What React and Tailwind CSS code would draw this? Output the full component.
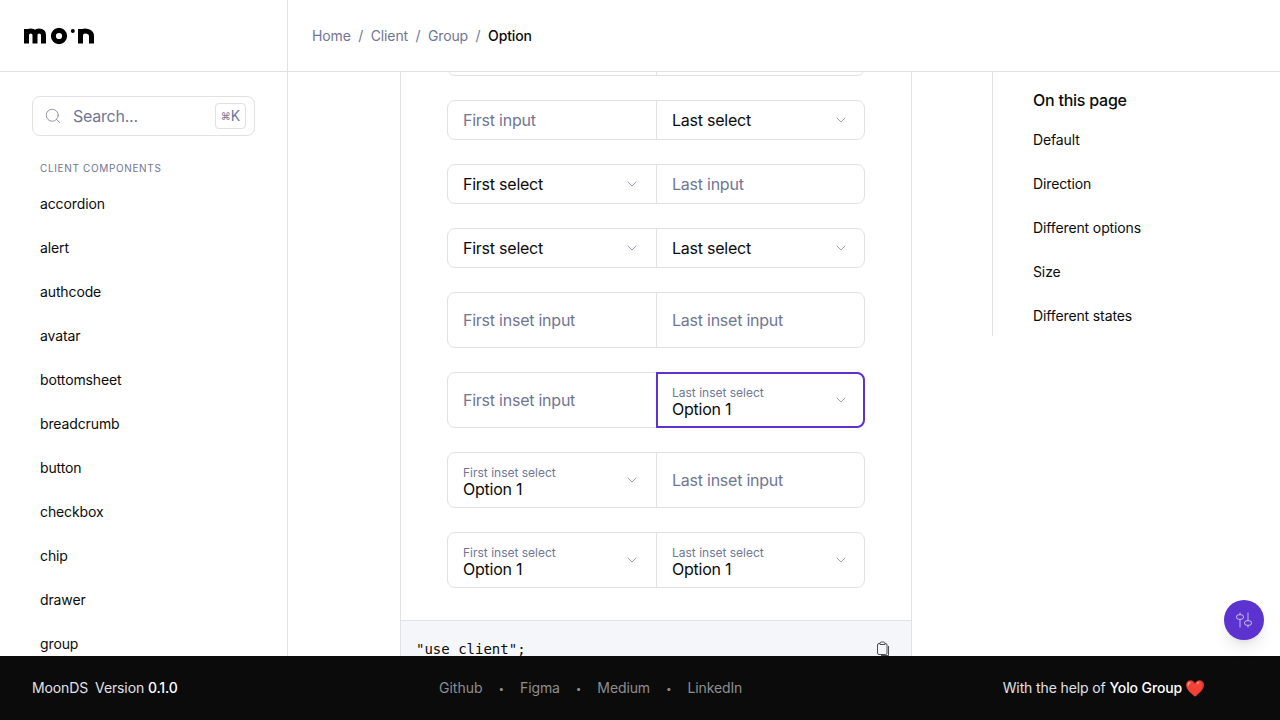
import { ChevronDown, Search } from "lucide-react";

const navItems = [
  "accordion",
  "alert",
  "authcode",
  "avatar",
  "bottomsheet",
  "breadcrumb",
  "button",
  "checkbox",
  "chip",
  "drawer",
  "group",
];

const toc = ["Default", "Direction", "Different options", "Size", "Different states"];

const rows = [
  { first: { kind: "input", text: "First input" }, last: { kind: "select", text: "Last select" } },
  { first: { kind: "select", text: "First select" }, last: { kind: "input", text: "Last input" } },
  { first: { kind: "select", text: "First select" }, last: { kind: "select", text: "Last select" } },
  { first: { kind: "input", text: "First inset input" }, last: { kind: "input", text: "Last inset input" }, tall: true },
  { first: { kind: "input", text: "First inset input" }, last: { kind: "inset", text: "Last inset select" }, tall: true, active: true },
  { first: { kind: "inset", text: "First inset select" }, last: { kind: "input", text: "Last inset input" }, tall: true },
  { first: { kind: "inset", text: "First inset select" }, last: { kind: "inset", text: "Last inset select" }, tall: true },
];

function Logo() {
  return (
    <svg width="70" height="16" viewBox="0 0 70 16" fill="none">
      <path d="M2.500 15.500V1M2.500 7C2.500 4.500 4 3 6.500 3C9.500 3 11 4.500 11 7V15.500M11 7C11 4.500 12.500 3 15 3C18 3 19.500 4.500 19.500 7V15.500" stroke="#000" strokeWidth="5" />
      <circle cx="35" cy="8" r="5.600" stroke="#000" strokeWidth="5" />
      <circle cx="48.800" cy="3" r="2" fill="#000" />
      <path d="M56.500 15.500V1M56.500 7.500C56.500 4.500 58 3 61 3C64 3 67.500 4.500 67.500 8V15.500" stroke="#000" strokeWidth="5" />
    </svg>
  );
}

function Cell({ cell, side, active }) {
  const shape = side === "first" ? "w-[208px] rounded-l-lg pr-4" : "flex-1 rounded-r-lg border-l border-[#e0e1e6] pr-[15px]";
  return (
    <div className={`relative flex h-full items-center justify-between pl-[15px] ${shape}`}>
      {cell.kind === "input" && <span className="text-base tracking-[-0.24px] text-[#717694]">{cell.text}</span>}
      {cell.kind === "select" && <span className="text-base tracking-[-0.24px] text-[#0b0b0b]">{cell.text}</span>}
      {cell.kind === "inset" && (
        <div className="flex flex-col pt-[3px]">
          <span className="-mb-px text-xs leading-4 text-[#717694]">{cell.text}</span>
          <span className="text-base leading-[18px] tracking-[-0.24px] text-[#0b0b0b]">Option 1</span>
        </div>
      )}
      {cell.kind !== "input" && <ChevronDown size={16} strokeWidth={1} className="text-[#717694]" />}
      {active && <div className="absolute -inset-px rounded-r-lg border-2 border-[#5c33cf]" />}
    </div>
  );
}

function GroupRow({ row }) {
  return (
    <div
      className={`flex w-[418px] rounded-lg border border-[#e0e1e6] bg-white ${row.tall ? "h-14" : "h-10"}`}
    >
      <Cell cell={row.first} side="first" />
      <Cell cell={row.last} side="last" active={row.active} />
    </div>
  );
}

export default function App() {
  return (
    <div className="flex h-screen flex-col overflow-hidden bg-white font-['Inter',sans-serif] text-[#0b0b0b]">
      <header className="flex h-[72px] shrink-0 border-b border-[#e0e1e6]">
        <div className="flex w-[288px] items-center border-r border-[#e0e1e6] pl-6">
          <Logo />
        </div>
        <nav className="flex items-center gap-[7.5px] pl-6 text-sm tracking-[-0.12px]">
          <span className="text-[#717694]">Home</span>
          <span className="text-[#717694]">/</span>
          <span className="text-[#717694]">Client</span>
          <span className="text-[#717694]">/</span>
          <span className="text-[#717694]">Group</span>
          <span className="text-[#717694]">/</span>
          <span className="font-medium">Option</span>
        </nav>
      </header>

      <div className="flex min-h-0 flex-1">
        <aside className="w-[288px] shrink-0 border-r border-[#e0e1e6] pl-8 pr-8 pt-6">
          <div className="flex h-10 w-[223px] items-center rounded-lg border border-[#e0e1e6] pl-[11px] pr-2">
            <Search size={18} strokeWidth={1} className="text-[#717694]" />
            <span className="ml-[11px] flex-1 text-base tracking-[-0.24px] text-[#717694]">Search...</span>
            <span className="flex h-[26px] w-[31px] items-center justify-center rounded border border-[#e0e1e6] text-[#717694]">
              <span className="text-[10px]">⌘</span>
              <span className="text-sm">K</span>
            </span>
          </div>
          <p className="mt-6 pl-2 text-[10px] leading-4 tracking-[0.65px] text-[#717694]">CLIENT COMPONENTS</p>
          <ul className="mt-1.5 pl-2">
            {navItems.map((item) => (
              <li key={item} className="flex h-11 items-center text-sm tracking-[-0.12px]">
                {item}
              </li>
            ))}
          </ul>
        </aside>

        <main className="w-[704px] shrink-0 overflow-hidden pl-28">
          <div className="-mt-9 w-[512px] border-x border-[#e0e1e6]">
            <div className="flex flex-col gap-6 pb-8 pl-[46px]">
              <GroupRow row={{ first: { kind: "input", text: "" }, last: { kind: "input", text: "" } }} />
              {rows.map((row, i) => (
                <GroupRow key={i} row={row} />
              ))}
            </div>
            <div className="flex h-24 items-start justify-between border-t border-[#e0e1e6] bg-[#f5f6f9] pl-[15px] pr-5 pt-[18px]">
              <code className="font-['DejaVu_Sans_Mono',monospace] text-sm leading-5">"use client";</code>
              <svg width="16" height="16" viewBox="0 0 16 16" fill="none" className="mt-0.5" stroke="#3a3a3a" strokeWidth="0.9">
                <path d="M5 2.500H4a1.500 1.500 0 0 0-1.500 1.500v8A1.500 1.500 0 0 0 4 13.500h6.500A1.500 1.500 0 0 0 12 12V4a1.500 1.500 0 0 0-1.500-1.500H10" />
                <path d="M5 2.500A1.500 1.500 0 0 1 6.500 1H8.500A1.500 1.500 0 0 1 10 2.500V3.500H5Z" />
                <path d="M13.500 5V14.500H6" />
              </svg>
            </div>
          </div>
        </main>

        <aside className="relative flex-1">
          <div className="h-[264px] border-l border-[#e0e1e6] pl-10 pt-[18px]">
            <p className="text-base leading-5 font-medium tracking-[-0.24px]">On this page</p>
            <ul className="mt-2">
              {toc.map((item) => (
                <li key={item} className="flex h-11 items-center text-sm tracking-[-0.12px]">
                  {item}
                </li>
              ))}
            </ul>
          </div>
        </aside>
      </div>

      <footer className="flex h-16 shrink-0 items-center justify-between bg-[#0b0b0b] pl-8 pr-[75px] text-sm tracking-[-0.12px]">
        <div className="w-[407px] text-[#e0e1e6]">
          <span>MoonDS</span>
          <span className="ml-[7px]">Version </span>
          <span className="font-medium text-white">0.1.0</span>
        </div>
        <div className="flex flex-1 items-center text-[#8e8e90]">
          <span className="tracking-normal">Github</span>
          <span className="mx-4 text-[10px]">•</span>
          <span>Figma</span>
          <span className="mx-4 text-[10px]">•</span>
          <span>Medium</span>
          <span className="mx-4 text-[10px]">•</span>
          <span>LinkedIn</span>
        </div>
        <div className="flex items-center text-[#e0e1e6]">
          With the help of&nbsp;<span className="font-medium text-white">Yolo Group</span>
          <span className="ml-[3px] text-base leading-none">❤️</span>
        </div>
      </footer>

      <button className="absolute left-[1224px] top-[600px] flex h-10 w-10 items-center justify-center rounded-full bg-[#5c33cf] shadow-lg">
        <svg width="20" height="20" viewBox="0 0 20 20" fill="none" stroke="#ffffff" strokeOpacity="0.65" strokeWidth="1">
          <path d="M6 2.500V4.750M6 9.250V17.500M14 2.500V10.750M14 15.250V17.500" />
          <rect x="2.500" y="4.750" width="7" height="4.500" rx="2.250" />
          <rect x="10.500" y="10.750" width="7" height="4.500" rx="2.250" />
        </svg>
      </button>
    </div>
  );
}
